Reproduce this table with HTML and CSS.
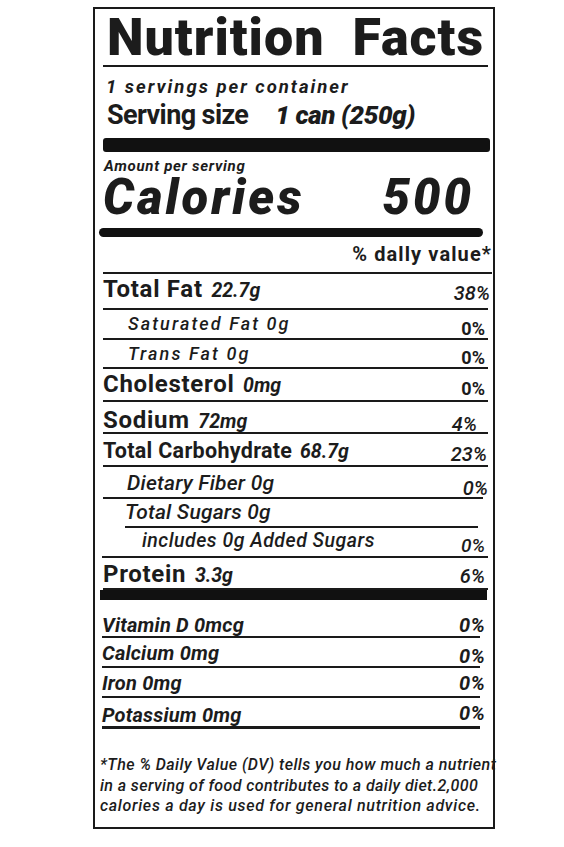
FILE: index.html
```html
<!DOCTYPE html>
<html lang="en">
<head>
<meta charset="utf-8">
<title>Nutrition Facts</title>
<link rel="stylesheet" href="styles.css">
</head>
<body>
<div class="label">
  <div class="title">Nutrition&nbsp; Facts</div>
  <div class="serving">
    <div class="servings-count">1 servings per container</div>
    <div class="serving-size"><span class="ss-label">Serving size</span><span class="ss-value">1 can (250g)</span></div>
  </div>
  <div class="bar bar-thick"></div>
  <div class="cal-block">
    <div class="amount">Amount per serving</div>
    <div class="calories"><span>Calories</span><span class="cal-num">500</span></div>
  </div>
  <div class="bar bar-med"></div>
  <div class="row r-dv"><span class="dv">% dally value*</span></div>
  <div class="row r-fat"><span class="name main">Total Fat <span class="amt">22.7g</span></span><span class="pct it">38%</span></div>
  <div class="row r-sat"><span class="name sub">Saturated Fat 0g</span><span class="pct b">0%</span></div>
  <div class="row r-trans"><span class="name sub">Trans Fat 0g</span><span class="pct b">0%</span></div>
  <div class="row r-chol"><span class="name main">Cholesterol <span class="amt">0mg</span></span><span class="pct b">0%</span></div>
  <div class="row r-sod"><span class="name main">Sodium <span class="amt">72mg</span></span><span class="pct it">4%</span></div>
  <div class="row r-carb"><span class="name main">Total Carbohydrate <span class="amt">68.7g</span></span><span class="pct it">23%</span></div>
  <div class="row r-fiber"><span class="name sub2">Dietary Fiber 0g</span><span class="pct it">0%</span></div>
  <div class="row r-sugar"><span class="name sub2">Total Sugars 0g</span></div>
  <div class="row r-added"><span class="name sub3">includes 0g Added Sugars</span><span class="pct it">0%</span></div>
  <div class="row r-prot"><span class="name main">Protein <span class="amt">3.3g</span></span><span class="pct it">6%</span></div>
  <div class="bar bar-prot"></div>
  <div class="row vit r-vitd"><span class="name">Vitamin D 0mcg</span><span class="pct">0%</span></div>
  <div class="row vit r-calc"><span class="name">Calcium 0mg</span><span class="pct">0%</span></div>
  <div class="row vit r-iron"><span class="name">Iron 0mg</span><span class="pct">0%</span></div>
  <div class="row vit r-pot"><span class="name">Potassium 0mg</span><span class="pct">0%</span></div>
  <p class="footnote"><span class="fn-1">*The % Daily Value (DV) tells you how much a nutrient</span><br><span class="fn-2">in a serving of food contributes to a daily diet.2,000</span><br><span class="fn-3">calories a day is used for general nutrition advice.</span></p>
</div>
</body>
</html>
```
FILE: styles.css
```css
html, body {
  margin: 0;
  padding: 0;
  background: #ffffff;
}

body {
  font-family: Roboto, "Noto Sans", "DejaVu Sans", sans-serif;
  color: #1c1c1c;
}

.label {
  box-sizing: border-box;
  width: 402px;
  height: 822px;
  margin: 7px 0 0 93px;
  border: 2px solid #1a1a1a;
  padding: 0 5px 0 8px;
  display: flex;
  flex-direction: column;
}

.title {
  box-sizing: border-box;
  height: 58px;
  padding: 3px 0 0 4px;
  font-size: 52px;
  line-height: 1;
  font-weight: 900;
  letter-spacing: 1px;
  white-space: nowrap;
  border-bottom: 2px solid #1a1a1a;
}

.serving {
  height: 71px;
  display: flex;
  flex-direction: column;
  padding-top: 11px;
  gap: 5px;
  box-sizing: border-box;
}

.servings-count {
  font-size: 18.5px;
  line-height: 1;
  font-style: italic;
  font-weight: 700;
  letter-spacing: 2px;
  margin-left: 3px;
}

.serving-size {
  display: flex;
  line-height: 1;
  margin-left: 4px;
}

.ss-label {
  font-size: 27px;
  font-weight: 700;
  letter-spacing: -0.6px;
}

.ss-value {
  font-size: 26px;
  font-weight: 900;
  font-style: italic;
  letter-spacing: -0.4px;
  margin-left: 27px;
}

.bar {
  background: #111111;
  flex: none;
}

.bar-thick {
  height: 14px;
  border-radius: 3px;
  margin-right: -2px;
}

.bar-med {
  height: 9px;
  border-radius: 5px;
  margin: 0 5px 0 -4px;
}

.bar-prot {
  height: 10px;
  margin: 0 1px 0 -3px;
}

.cal-block {
  height: 76px;
  display: flex;
  flex-direction: column;
  padding-top: 7px;
  box-sizing: border-box;
}

.amount {
  font-size: 15px;
  line-height: 14px;
  font-style: italic;
  font-weight: 700;
  letter-spacing: 0.7px;
  margin-left: 1px;
}

.calories {
  display: flex;
  justify-content: space-between;
  font-size: 49px;
  line-height: 1;
  font-style: italic;
  font-weight: 900;
  letter-spacing: 3px;
  margin-right: 14px;
}

.row {
  flex: none;
  box-sizing: border-box;
  display: flex;
  justify-content: space-between;
  align-items: flex-start;
  border-bottom: 2px solid #1a1a1a;
  padding-right: 3px;
}

.row > span {
  display: block;
  line-height: 1;
  white-space: nowrap;
}

.r-dv {
  height: 37px;
  justify-content: flex-end;
  padding-right: 0;
  margin-right: -4px;
}

.dv {
  font-size: 20px;
  font-weight: 700;
  letter-spacing: 1.1px;
  padding-top: 7px;
}

.main {
  font-size: 24px;
  font-weight: 700;
  letter-spacing: 0.7px;
}

.amt {
  font-size: 19.5px;
  font-style: italic;
  font-weight: 700;
  letter-spacing: 0;
  margin-left: 2px;
}

.sub {
  font-size: 18px;
  font-style: italic;
  font-weight: 500;
  letter-spacing: 2.1px;
  margin-left: 25px;
}

.sub2 {
  font-size: 21px;
  font-style: italic;
  font-weight: 500;
  letter-spacing: 0.2px;
  margin-left: 24px;
}

.sub3 {
  font-size: 19.5px;
  font-style: italic;
  font-weight: 500;
  letter-spacing: 0.5px;
  margin-left: 40px;
}

.pct.b {
  font-size: 18px;
  font-weight: 700;
}

.pct.it {
  font-size: 20px;
  font-style: italic;
  font-weight: 500;
}

.r-fat { height: 36px; }
.r-fat .name { padding-top: 3px; }
.r-fat .pct { padding-top: 9px; margin-right: -5px; }

.r-sat { height: 30px; }
.r-sat .name { padding-top: 5px; }
.r-sat .pct { padding-top: 10px; }

.r-trans { height: 29px; }
.r-trans .name { padding-top: 5px; }
.r-trans .pct { padding-top: 9px; }

.r-chol { height: 33px; }
.r-chol .name { padding-top: 3px; }
.r-chol .pct { padding-top: 11px; }

.r-sod { height: 32px; }
.r-sod .name { padding-top: 6px; }
.r-sod .pct { padding-top: 12px; margin-right: 8px; }

.r-carb { height: 33px; }
.r-carb .name { padding-top: 6px; font-size: 21.5px; letter-spacing: 0.3px; }
.r-carb .pct { padding-top: 10px; margin-right: -2px; }

.r-fiber { height: 32px; margin-right: 5px; padding-right: 0; }
.r-fiber .name { padding-top: 6px; }
.r-fiber .pct { padding-top: 11px; margin-right: -5px; }

.r-sugar { height: 29px; margin: 0 10px 0 22px; }
.r-sugar .name { padding-top: 3px; margin-left: 0; }

.r-added { height: 30px; margin-left: -1px; }
.r-added .name { padding-top: 3px; }
.r-added .pct { padding-top: 8px; font-size: 19px; }

.r-prot { height: 32px; }
.r-prot .name { padding-top: 4px; }
.r-prot .pct { padding-top: 8px; }

.vit {
  margin: 0 8px 0 -1px;
  padding-right: 0;
}

.vit > span {
  font-size: 20px;
  font-style: italic;
  font-weight: 700;
  letter-spacing: 0.2px;
}

.vit .pct { margin-right: -5px; }

.r-vitd { height: 38px; }
.r-vitd .name, .r-vitd .pct { padding-top: 15px; }

.r-calc { height: 30px; }
.r-calc .name { padding-top: 5px; }
.r-calc .pct { padding-top: 8px; }

.r-iron { height: 30px; }
.r-iron .name, .r-iron .pct { padding-top: 5px; }

.r-pot { height: 31px; border-bottom-width: 3px; }
.r-pot .name { padding-top: 7px; }
.r-pot .pct { padding-top: 5px; }

.footnote {
  margin: 0 0 0 -3px;
  padding-top: 26px;
  font-size: 16px;
  line-height: 20.5px;
  font-style: italic;
  font-weight: 500;
  white-space: nowrap;
}

.fn-1 { letter-spacing: 0.45px; }
.fn-2 { letter-spacing: 0.4px; }
.fn-3 { letter-spacing: 0.7px; }
```
